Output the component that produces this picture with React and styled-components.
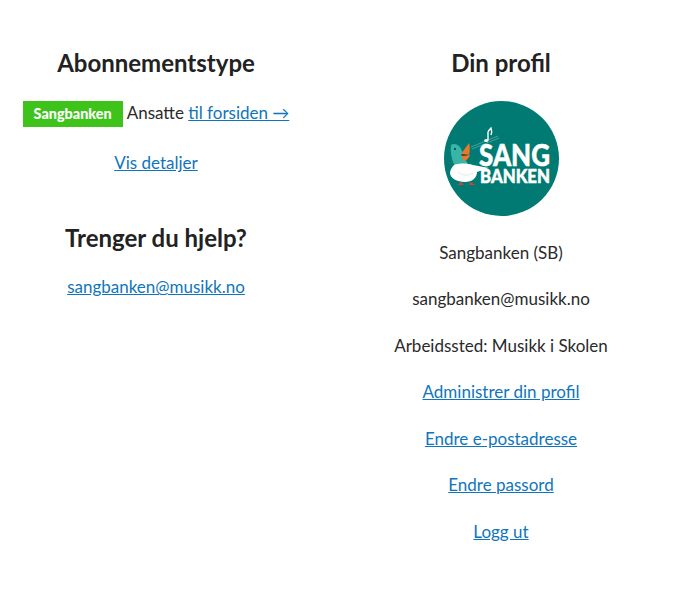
import React from 'react'
import styled, { createGlobalStyle } from 'styled-components'

const GlobalStyle = createGlobalStyle`
  html, body {
    margin: 0;
    padding: 0;
    background: #fff;
  }
  body {
    font-family: Lato, "Open Sans", sans-serif;
    font-size: 17px;
    line-height: 26px;
    color: #2a2a2a;
  }
`

const Page = styled.div`
  display: grid;
  grid-template-columns: 312px 378px;
  padding-top: 47px;
  text-align: center;
`

const Column = styled.section`
  display: flex;
  flex-direction: column;
  align-items: center;
`

const Heading = styled.h2`
  margin: ${(p) => p.$top || 0}px 0 ${(p) => p.$gap || 22}px;
  font-size: 24px;
  line-height: 32px;
  font-weight: 700;
  color: #222;
`

const Row = styled.p`
  margin: 0 0 ${(p) => p.$gap ?? 20.5}px;
  white-space: nowrap;
`

const Link = styled.a`
  color: #0f75bc;
  text-decoration: underline;
`

const Badge = styled.span`
  display: inline-block;
  width: 100px;
  height: 26px;
  margin-right: 4px;
  background: #3dc31a;
  color: #fff;
  font-size: 14.4px;
  font-weight: 900;
  line-height: 26px;
`

const Avatar = styled.svg`
  display: block;
  width: 115px;
  height: 115px;
  margin-bottom: 23.7px;
`

const LogoText = styled.text`
  font-family: Lato, sans-serif;
  font-weight: 900;
  fill: #fff;
  stroke: #fff;
  stroke-width: 0.5px;
`

const Logo = () => (
  <Avatar viewBox="0 0 115 115">
    <circle cx="57.5" cy="57.5" r="57.5" fill="#007a72" />
    {/* staff and note */}
    <path d="M27 46l27-11M28 48l27-11" stroke="#8cc9c2" strokeWidth="0.5" fill="none" />
    <path d="M44 31v8M44 31c1-2 2-3 3-4 1 3 1 5 0 7" stroke="#fff" strokeWidth="1.4" fill="none" />
    <ellipse cx="42.3" cy="39.5" rx="2.2" ry="1.6" fill="#fff" />
    {/* bird */}
    <path d="M7 44c2-2 6-1 8 1 3 3 4 7 5 11l4 7c-4 3-10 4-13 2-3-5-5-14-4-21z" fill="#36b5a8" />
    <path d="M17 53l8-11c1 4 1 8 0 12z" fill="#e8792a" />
    <path d="M18 55l8-1c-1 3-4 6-7 6z" fill="#e8792a" />
    <path d="M17 53l8 1-7 1z" fill="#6b2d14" />
    <circle cx="11" cy="48" r="0.9" fill="#222" />
    <path d="M10 64c5-2 13-2 19 0l16 3-12 4c0 6-5 10-12 10-8 0-15-4-15-9 0-3 2-6 4-8z" fill="#fff" />
    <path d="M14 71c4 4 10 4 15 1" stroke="#cfd8d6" strokeWidth="0.6" fill="none" />
    <path d="M13 84l4-3 3 3zM26 81l6 3-7 0z" fill="#c9473a" />
    <LogoText x="35" y="65" fontSize="31" textLength="71" lengthAdjust="spacingAndGlyphs">SANG</LogoText>
    <LogoText x="36" y="81.5" fontSize="19" textLength="70" lengthAdjust="spacingAndGlyphs">BANKEN</LogoText>
  </Avatar>
)

const App = () => (
  <>
    <GlobalStyle />
    <Page>
      <Column>
        <Heading $gap={21}>Abonnementstype</Heading>
        <Row $gap={23}>
          <Badge>Sangbanken</Badge>
          Ansatte <Link href="#forsiden">til forsiden →</Link>
        </Row>
        <Row $gap={0}>
          <Link href="#detaljer">Vis detaljer</Link>
        </Row>
        <Heading $top={46} $gap={20}>Trenger du hjelp?</Heading>
        <Row>
          <Link href="mailto:sangbanken@musikk.no">sangbanken@musikk.no</Link>
        </Row>
      </Column>
      <Column>
        <Heading>Din profil</Heading>
        <Logo />
        <Row>Sangbanken (SB)</Row>
        <Row>sangbanken@musikk.no</Row>
        <Row>Arbeidssted: Musikk i Skolen</Row>
        <Row><Link href="#profil">Administrer din profil</Link></Row>
        <Row><Link href="#epost">Endre e-postadresse</Link></Row>
        <Row><Link href="#passord">Endre passord</Link></Row>
        <Row><Link href="#loggut">Logg ut</Link></Row>
      </Column>
    </Page>
  </>
)

export default App
